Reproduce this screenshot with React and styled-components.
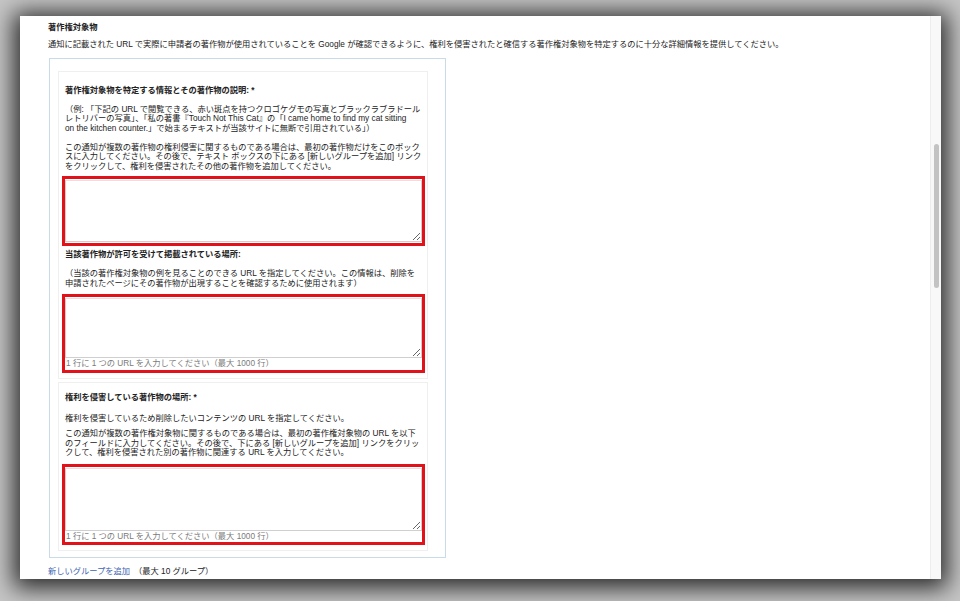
import React from 'react';
import styled, { createGlobalStyle } from 'styled-components';

const GlobalStyle = createGlobalStyle`
  html, body {
    margin: 0;
    padding: 0;
    background: #c6c6c6;
  }
  body {
    width: 960px;
    height: 601px;
    overflow: hidden;
    font-family: "Liberation Sans", Arial, "Noto Sans CJK JP", sans-serif;
  }
`;

const Stage = styled.div`
  padding: 16px 0 0 20px;
`;

const Window = styled.div`
  width: 921px;
  height: 563px;
  background: #fff;
  display: flex;
  box-shadow: 0 3px 22px 6px rgba(0, 0, 0, 0.8);
`;

const Content = styled.div`
  flex: 1;
  padding: 7px 0 0 28px;
  color: #222;
  font-size: 8.25px;
  line-height: 9.6px;
`;

const PageTitle = styled.div`
  font-weight: bold;
`;

const Intro = styled.p`
  margin: 7px 0 9px;
`;

const Group = styled.div`
  width: 379px;
  margin-left: 1px;
  padding: 12px 8px 6px 8px;
  border: 1px solid #c9dbe7;
`;

const Section = styled.div`
  width: 357px;
  padding: ${p => p.$top || 12}px 5px 4px 6px;
  border: 1px solid #efefef;
  & + & {
    margin-top: 3px;
  }
`;

const Label = styled.div`
  font-weight: bold;
  margin-bottom: ${p => p.$gap || 9}px;
`;

const Note = styled.p`
  margin: 0 0 ${p => p.$gap || 9}px;
  white-space: nowrap;
`;

const Highlight = styled.div`
  margin: 0 -3px ${p => p.$gap || 4}px;
  padding: 1px 0;
  border: 3px solid #e2121b;
`;

const Field = styled.textarea`
  display: block;
  box-sizing: border-box;
  width: 100%;
  height: ${p => p.$h}px;
  margin: 0;
  border: 1px solid #cfcfcf;
  border-top-color: #e2e2e2;
  background: #fff;
  font: inherit;
`;

const Hint = styled.div`
  color: #7a7a7a;
  padding-left: 1px;
  padding-top: 1px;
`;

const Footer = styled.div`
  margin-top: 9px;
`;

const Link = styled.a`
  color: #3d64b2;
  text-decoration: none;
  margin-right: 4px;
`;

const Track = styled.div`
  width: 10px;
  border-left: 1px solid #ededed;
  background: #f8f8f8;
  display: flex;
  justify-content: center;
`;

const Thumb = styled.div`
  width: 5px;
  height: 144px;
  margin-top: 128px;
  border-radius: 3px;
  background: #c3c3c3;
`;

export default function App() {
  return (
    <Stage>
      <GlobalStyle />
      <Window>
        <Content>
          <PageTitle>著作権対象物</PageTitle>
          <Intro>
            通知に記載された URL で実際に申請者の著作物が使用されていることを Google が確認できるように、権利を侵害されたと確信する著作権対象物を特定するのに十分な詳細情報を提供してください。
          </Intro>
          <Group>
            <Section $top={14}>
              <Label>著作権対象物を特定する情報とその著作物の説明: *</Label>
              <Note>
                （例: 「下記の URL で閲覧できる、赤い斑点を持つクロゴケグモの写真とブラックラブラドール<br />
                レトリバーの写真」、「私の著書『Touch Not This Cat』の「I came home to find my cat sitting<br />
                on the kitchen counter.」で始まるテキストが当該サイトに無断で引用されている」）
              </Note>
              <Note $gap={5}>
                この通知が複数の著作物の権利侵害に関するものである場合は、最初の著作物だけをこのボック<br />
                スに入力してください。その後で、テキスト ボックスの下にある [新しいグループを追加] リンク<br />
                をクリックして、権利を侵害されたその他の著作物を追加してください。
              </Note>
              <Highlight>
                <Field $h={62} />
              </Highlight>
              <Label>当該著作物が許可を受けて掲載されている場所:</Label>
              <Note $gap={6}>
                （当該の著作権対象物の例を見ることのできる URL を指定してください。この情報は、削除を<br />
                申請されたページにその著作物が出現することを確認するために使用されます）
              </Note>
              <Highlight $gap={1}>
                <Field $h={60} />
                <Hint>1 行に 1 つの URL を入力してください（最大 1000 行）</Hint>
              </Highlight>
            </Section>
            <Section $top={10}>
              <Label $gap={12}>権利を侵害している著作物の場所: *</Label>
              <Note $gap={5}>権利を侵害しているため削除したいコンテンツの URL を指定してください。</Note>
              <Note $gap={6}>
                この通知が複数の著作権対象物に関するものである場合は、最初の著作権対象物の URL を以下<br />
                のフィールドに入力してください。その後で、下にある [新しいグループを追加] リンクをクリッ<br />
                クして、権利を侵害された別の著作物に関連する URL を入力してください。
              </Note>
              <Highlight $gap={1}>
                <Field $h={63} />
                <Hint>1 行に 1 つの URL を入力してください（最大 1000 行）</Hint>
              </Highlight>
            </Section>
          </Group>
          <Footer>
            <Link href="#">新しいグループを追加</Link>
            （最大 10 グループ）
          </Footer>
        </Content>
        <Track>
          <Thumb />
        </Track>
      </Window>
    </Stage>
  );
}
